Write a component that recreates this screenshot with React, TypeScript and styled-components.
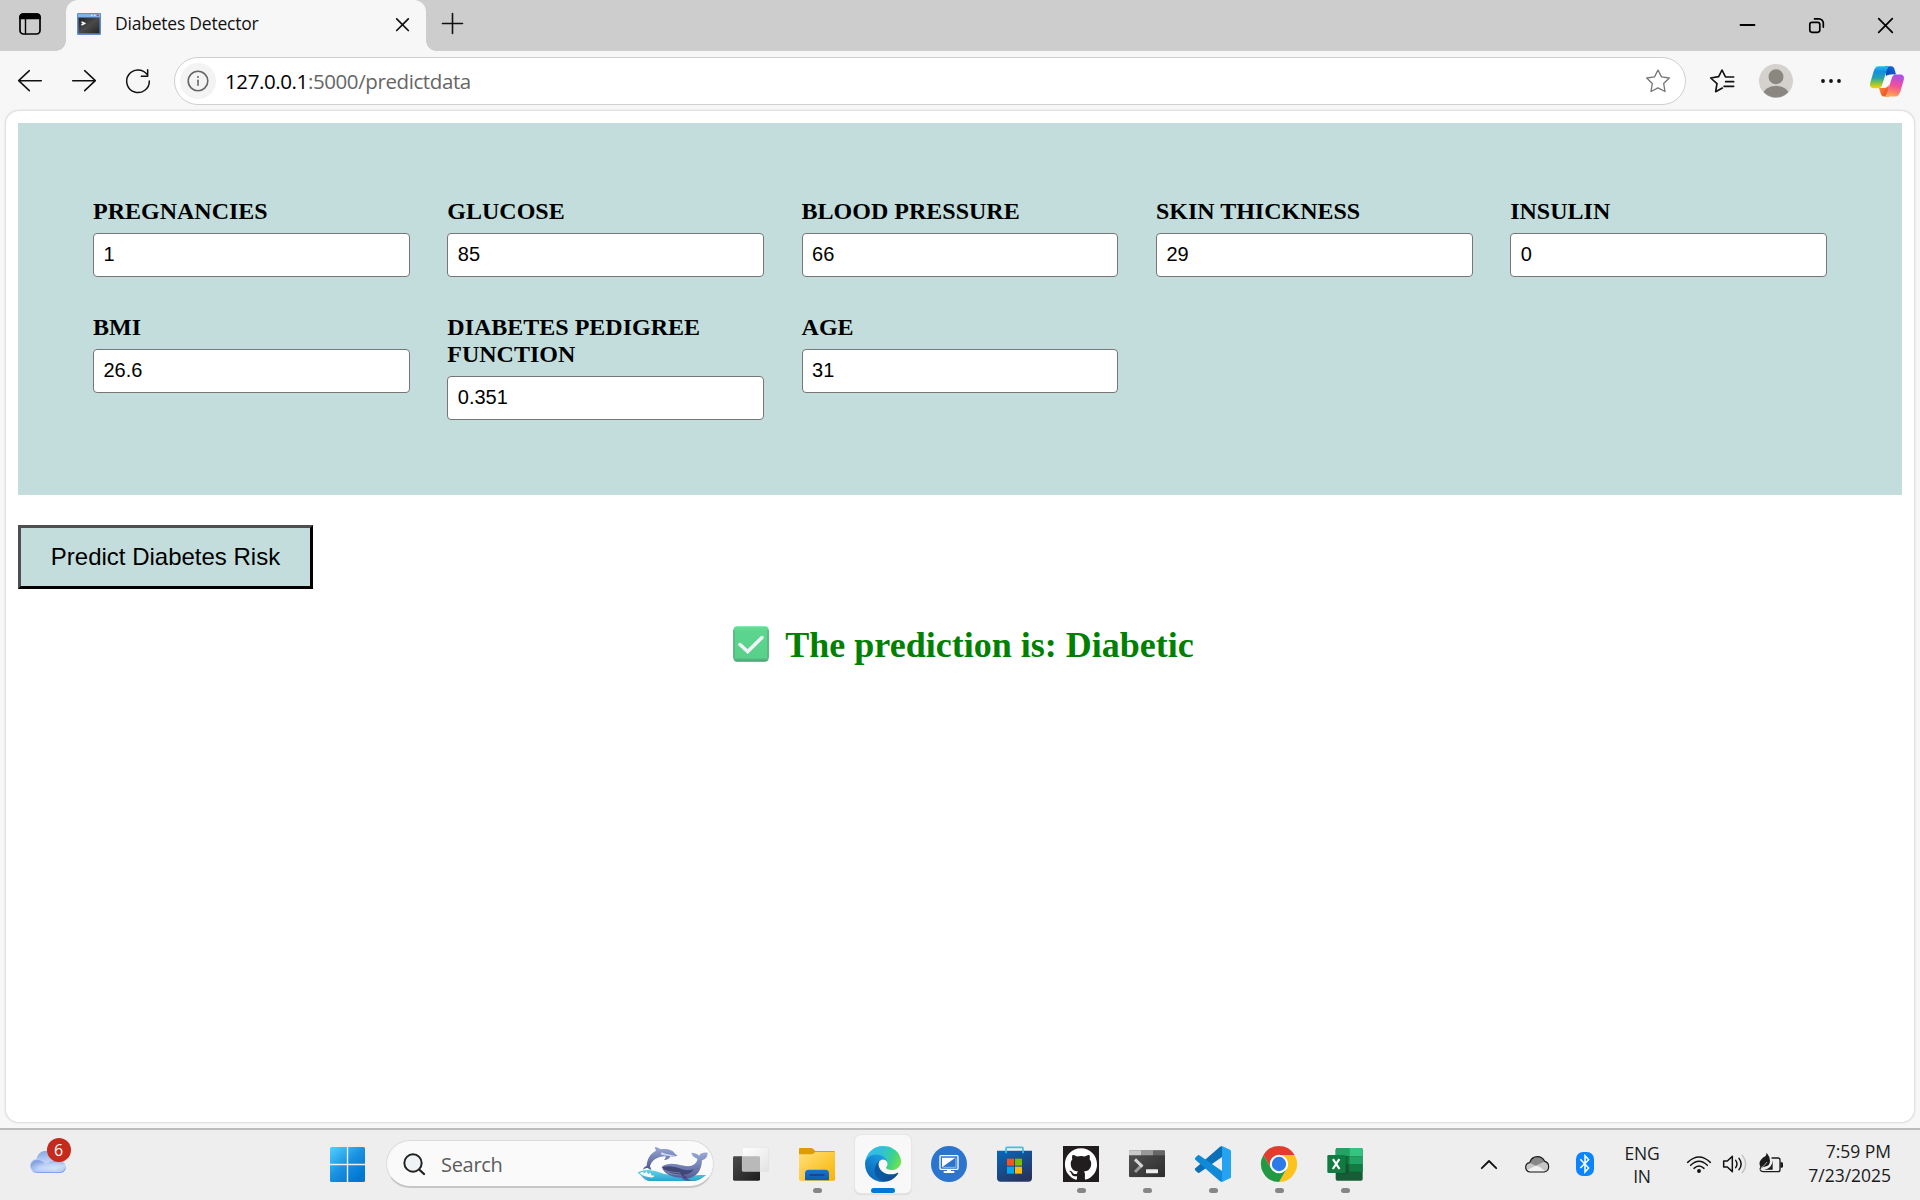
import React from "react";
import styled, { createGlobalStyle } from "styled-components";

const ui = `"Open Sans", "Noto Sans", sans-serif`;

const GlobalStyle = createGlobalStyle`
  * { box-sizing: border-box; }
  body { margin: 0; background: #f7f7f7; overflow: hidden; }
  svg { display: block; flex: none; overflow: visible; }
`;

const Screen = styled.div`
  display: flex;
  flex-direction: column;
  width: 1920px;
  height: 1200px;
  background: #f7f7f7;
  font-family: ${ui};
`;

/* ---------- tab strip ---------- */
const TabStrip = styled.div`
  display: flex;
  height: 51px;
  flex: none;
  background: #cdcdcd;
`;

const TabActions = styled.div`
  display: flex;
  align-items: flex-start;
  width: 66px;
  padding: 13px 0 0 19px;
`;

const Tab = styled.div`
  position: relative;
  display: flex;
  align-items: center;
  width: 360px;
  height: 51px;
  padding: 0 17px 3px 11px;
  border-radius: 12px 12px 0 0;
  background: #f7f7f7;

  &::before,
  &::after {
    content: "";
    position: absolute;
    bottom: 0;
    width: 10px;
    height: 10px;
  }
  &::before {
    left: -10px;
    background: radial-gradient(circle at 0 0, transparent 9.5px, #f7f7f7 10px);
  }
  &::after {
    right: -10px;
    background: radial-gradient(circle at 100% 0, transparent 9.5px, #f7f7f7 10px);
  }
`;

const TabTitle = styled.span`
  flex: 1;
  margin-left: 14px;
  padding-bottom: 2px;
  font-size: 17.5px;
  letter-spacing: -0.22px;
  line-height: 24px;
  color: #111;
  white-space: nowrap;
`;

const NewTab = styled.div`
  flex: 1;
  padding: 13px 0 0 16px;
`;

const WindowControls = styled.div`
  display: flex;
  gap: 54px;
  padding: 18px 27px 0 0;
`;

/* ---------- toolbar ---------- */
const Toolbar = styled.div`
  display: flex;
  align-items: center;
  height: 60px;
  flex: none;
  padding: 0 16px 0 18px;
`;

const NavButtons = styled.div`
  display: flex;
  align-items: center;
  gap: 30px;
  width: 156px;
`;

const AddressBar = styled.div`
  display: flex;
  align-items: center;
  width: 1512px;
  height: 48px;
  padding: 0 15px 0 5px;
  border: 1.5px solid #cfcfcf;
  border-radius: 24px;
  background: #fff;
`;

const InfoBadge = styled.div`
  display: grid;
  place-items: center;
  width: 36px;
  height: 36px;
  border-radius: 50%;
  background: #f3f3f3;
`;

const Url = styled.div`
  flex: 1;
  margin-left: 9px;
  padding-bottom: 1px;
  font-size: 20.5px;
  letter-spacing: -0.4px;
  line-height: 28px;
  color: #666;
  white-space: nowrap;
`;

const UrlHost = styled.span`
  color: #000;
`;

const ToolbarIcons = styled.div`
  display: flex;
  align-items: center;
  gap: 28.5px;
  margin-left: 24px;
`;

const FavoritesButton = styled.div`
  margin-right: -5px;
`;

/* ---------- page ---------- */
const Page = styled.main`
  height: 1011px;
  flex: none;
  margin: 0 6px 6px;
  padding: 12px;
  border-radius: 13px;
  background: #fff;
  box-shadow: 0 0 2px 0.5px rgba(0, 0, 0, 0.12);
`;

const FormPanel = styled.form`
  display: grid;
  grid-template-columns: repeat(5, 1fr);
  align-items: start;
  gap: 37.5px;
  height: 372px;
  padding: 75px;
  background: #c3dddc;
`;

const Field = styled.label`
  display: flex;
  flex-direction: column;
  gap: 8px;
  font: bold 24px/27px "Liberation Serif", "Times New Roman", serif;
  color: #000;
`;

const Input = styled.input`
  width: 100%;
  height: 43.5px;
  padding: 0 9px 1.5px 9.5px;
  border: 1px solid #767676;
  border-radius: 4px;
  outline: none;
  background: #fff;
  font: 20px/23px "Liberation Sans", Arial, sans-serif;
  color: #000;
`;

const PredictButton = styled.button`
  display: block;
  width: 295px;
  height: 64px;
  margin: 30px 0 0;
  padding: 0 0 1px;
  border: 3px solid;
  border-color: #4f4f51 #000 #000 #4f4f51;
  border-radius: 0;
  background: #c3dddc;
  font: 24px/28px "Liberation Sans", Arial, sans-serif;
  color: #000;
  white-space: nowrap;
`;

const Result = styled.h2`
  display: flex;
  align-items: center;
  justify-content: center;
  gap: 16px;
  height: 42px;
  margin: 35px 0 0;
  padding-left: 7px;
  font: bold 36px/42px "Liberation Serif", "Times New Roman", serif;
  color: #008000;
  white-space: nowrap;

  svg {
    margin-bottom: 2px;
  }
`;

/* ---------- taskbar ---------- */
const Taskbar = styled.footer`
  display: flex;
  height: 72px;
  flex: none;
  border-top: 2px solid #bcbcbc;
  background: #eee;
`;

const Widgets = styled.div`
  width: 314px;
  padding: 8px 0 0 30px;
`;

const WidgetIcon = styled.div`
  position: relative;
  width: 42px;
  height: 36px;
`;

const CountBadge = styled.span`
  position: absolute;
  top: 0;
  left: 16.5px;
  width: 24px;
  height: 24px;
  border-radius: 50%;
  background: #c42b1c;
  font-size: 16px;
  line-height: 24px;
  text-align: center;
  color: #fff;
`;

const AppSlot = styled.div`
  display: flex;
  flex-direction: column;
  align-items: center;
  width: 66px;
  padding-top: 5px;
`;

const AppTile = styled.div<{ $active?: boolean }>`
  display: grid;
  place-items: center;
  position: relative;
  width: 56px;
  height: 58px;
  border-radius: 6px;
  background: ${(p) => (p.$active ? "#f8f8f8" : "transparent")};
  box-shadow: ${(p) => (p.$active ? "0 0 0 1px #e6e6e6, 0 1px 1px 0.5px #dcdcdc" : "none")};
`;

const Indicator = styled.span<{ $active?: boolean }>`
  position: absolute;
  bottom: 0;
  left: ${(p) => (p.$active ? "16px" : "23.5px")};
  width: ${(p) => (p.$active ? "24px" : "9px")};
  height: 5px;
  border-radius: 2.5px;
  background: ${(p) => (p.$active ? "#0078d4" : "#868686")};
`;

const SearchBox = styled.div`
  display: flex;
  align-items: center;
  width: 328px;
  height: 48px;
  margin: 10px 4px 0 6px;
  padding: 1px 5px 0 16px;
  border: 1.5px solid #dcdcdc;
  border-bottom: 2px solid #c6c6c6;
  border-radius: 24px;
  background: #fafafa;
`;

const SearchText = styled.span`
  flex: 1;
  margin-left: 16px;
  padding-top: 1px;
  font-size: 20px;
  letter-spacing: -0.3px;
  line-height: 28px;
  color: #5c5c5c;
`;

const Tray = styled.div`
  display: flex;
  flex: 1;
  justify-content: flex-end;
  height: 68px;
  padding-right: 29px;
  align-items: center;
`;

const TrayItem = styled.div<{ $gap: number }>`
  margin-right: ${(p) => p.$gap}px;
`;

const Language = styled.div`
  width: 40px;
  margin-right: 25px;
  padding-top: 1px;
  font-size: 17.5px;
  letter-spacing: -0.25px;
  line-height: 23px;
  text-align: center;
  color: #1b1b1b;
`;

const Clock = styled.div`
  width: 108px;
  padding-bottom: 2px;
  font-size: 17.5px;
  letter-spacing: -0.02px;
  line-height: 24px;
  text-align: right;
  white-space: nowrap;
  color: #1b1b1b;
`;

/* ---------- icons ---------- */
type StrokeProps = { w: number; h: number; box: string; sw?: number; color?: string; children: React.ReactNode };
const Stroke = ({ w, h, box, sw = 1.6, color = "#111", children }: StrokeProps) => (
  <svg width={w} height={h} viewBox={box} fill="none" stroke={color} strokeWidth={sw} strokeLinecap="round" strokeLinejoin="round">
    {children}
  </svg>
);

const ConsoleFavicon = () => (
  <svg width="24" height="22" viewBox="0 0 24 22">
    <defs>
      <linearGradient id="cf" x1="0" y1="0" x2="1" y2="1">
        <stop offset="0" stopColor="#222" /><stop offset=".5" stopColor="#4a4a4a" /><stop offset="1" stopColor="#252525" />
      </linearGradient>
    </defs>
    <rect width="24" height="22" rx="1" fill="#5d8ed0" />
    <rect x="1" y="1" width="22" height="3" fill="#85b1ea" />
    <rect x="1.5" y="4.7" width="21" height="15.6" fill="url(#cf)" />
    <path d="M14 2.3h1.5M17 2.3h1.5" stroke="#dcebff" strokeWidth="1.3" />
    <path d="M19.7 2.3h2" stroke="#e23b2e" strokeWidth="1.6" />
    <path d="M4.5 9l3 1.4-3 1.6M7.5 10.4l.5.4" stroke="#fff" strokeWidth="1.5" fill="none" />
  </svg>
);

const CopilotIcon = () => (
  <svg width="34" height="31" viewBox="810 198 102 92">
    <defs>
      <linearGradient id="cpa" x1="0" y1="0" x2="0" y2="1">
        <stop offset="0" stopColor="#1cc0ee" /><stop offset=".25" stopColor="#118fe0" /><stop offset=".55" stopColor="#2aa5a8" /><stop offset=".78" stopColor="#8dc63f" /><stop offset="1" stopColor="#ffd000" />
      </linearGradient>
      <linearGradient id="cpb" x1=".5" y1="0" x2=".3" y2="1">
        <stop offset="0" stopColor="#ad4fe8" /><stop offset=".45" stopColor="#ee4f9e" /><stop offset=".75" stopColor="#fb7b70" /><stop offset="1" stopColor="#ffb04d" />
      </linearGradient>
      <linearGradient id="cpc" x1="0" y1="1" x2="1" y2="0">
        <stop offset="0" stopColor="#0a3fae" /><stop offset="1" stopColor="#1567e0" />
      </linearGradient>
      <linearGradient id="cpd" x1="0" y1="0" x2="1" y2="1">
        <stop offset="0" stopColor="#ff9a2e" /><stop offset="1" stopColor="#e8402f" />
      </linearGradient>
    </defs>
    <path d="M855 198h18c7 0 9 4 11 11l4 14h-12c-10 0-14 4-17 13z" fill="url(#cpc)" />
    <path d="M867 289h-14c-8 0-10-5-12-12l-4-14h12c10 0 14-5 17-14z" fill="url(#cpd)" />
    <path d="M835 198h37c-7 0-9 5-12 14l-13 40c-3 9-6 12-14 12h-12c-9 0-13-7-10-17l10-34c4-11 7-15 14-15z" fill="url(#cpa)" />
    <path d="M887 289h-37c7 0 9-5 12-14l13-40c3-9 6-12 14-12h12c9 0 13 7 10 17l-10 34c-4 11-7 15-14 15z" fill="url(#cpb)" />
    <path d="M881 224c-5 3-7 8-9 14l-4 13c-3 8-7 12-14 12h-13c5-3 7-8 9-14l4-12c3-9 7-13 14-13z" fill="#fafafa" />
  </svg>
);

const CheckMark = () => (
  <svg width="36" height="36" viewBox="0 0 36 36" role="img" aria-label="check">
    <defs>
      <linearGradient id="ck" x1="0" y1="0" x2="0" y2="1">
        <stop offset="0" stopColor="#5ee494" /><stop offset=".15" stopColor="#5bd58f" /><stop offset=".88" stopColor="#59d18b" /><stop offset="1" stopColor="#4b9a6e" />
      </linearGradient>
    </defs>
    <rect x=".3" y=".3" width="35.4" height="35.4" rx="4" fill="url(#ck)" />
    <path d="M.9 4v28M35.1 4v28" stroke="#4aa877" strokeWidth="1.1" fill="none" />
    <path d="M7 18.5l7.7 7L29 11.5" stroke="#f3f3f7" strokeWidth="3.5" fill="none" strokeLinecap="round" strokeLinejoin="miter" />
  </svg>
);

const CloudIcon = () => (
  <svg width="36" height="36" viewBox="90 144 108 108">
    <defs>
      <linearGradient id="cl" x1="0" y1="0" x2=".2" y2="1">
        <stop offset="0" stopColor="#7f9fe0" /><stop offset=".5" stopColor="#b7cdf2" /><stop offset=".85" stopColor="#d3e0f5" /><stop offset="1" stopColor="#7ea4ec" />
      </linearGradient>
      <radialGradient id="cl2" cx=".7" cy=".8" r=".8">
        <stop offset="0" stopColor="#dfe9f8" /><stop offset=".6" stopColor="#b9cff3" /><stop offset="1" stopColor="#7796dc" />
      </radialGradient>
    </defs>
    <path d="M110 249c-12 0-20-9-20-20 0-12 8-21 19-21 3-16 15-26 30-26 17 0 30 12 32 28 15-1 27 6 27 20 0 12-9 19-20 19z" fill="url(#cl)" />
    <path d="M110 246c-10 0-18-8-18-18s8-18 19-18c12 0 20 5 26 13 10-8 25-13 37-10 13 1 21 7 21 17s-8 16-18 16z" fill="url(#cl2)" opacity=".75" />
  </svg>
);

const StartIcon = () => (
  <svg width="35" height="35" viewBox="0 0 35 35">
    <defs>
      <linearGradient id="st" gradientUnits="userSpaceOnUse" x1="0" y1="0" x2="28" y2="32">
        <stop offset="0" stopColor="#4fd2ff" /><stop offset=".55" stopColor="#1a91e0" /><stop offset="1" stopColor="#0077d3" />
      </linearGradient>
    </defs>
    <path d="M1.5 0H16.8V16.8H0V1.5A1.5 1.5 0 0 1 1.5 0zM18.2 0H33.5A1.5 1.5 0 0 1 35 1.5V16.8H18.2zM0 18.2H16.8V35H1.5A1.5 1.5 0 0 1 0 33.5zM18.2 18.2H35V33.5A1.5 1.5 0 0 1 33.5 35H18.2z" fill="url(#st)" />
  </svg>
);

const SearchIcon = () => (
  <Stroke w={22} h={22} box="98 98 66 66" sw={6} color="#222">
    <circle cx="128" cy="128" r="26" fill="#f0f3f5" />
    <path d="M148 149l13 12" strokeWidth="7" />
  </Stroke>
);

const DolphinArt = () => (
  <svg width="71" height="36" viewBox="799 88 213 106">
    <defs>
      <linearGradient id="dl" x1="0" y1="0" x2="0" y2="1">
        <stop offset="0" stopColor="#96a8d8" /><stop offset="1" stopColor="#4d568f" />
      </linearGradient>
      <linearGradient id="sea" x1="0" y1="0" x2="0" y2="1">
        <stop offset="0" stopColor="#62d4e8" /><stop offset="1" stopColor="#27a6c8" />
      </linearGradient>
    </defs>
    <path d="M801 167c12-9 32-10 52-5 26 8 40 14 76 14 30 1 55-3 78-2-14 10-22 18-40 18H840c-14 0-22-8-28-16z" fill="url(#sea)" />
    <path d="M806 169l10-5 5 5 7-6 4 8 8-4 2 8 9 1-3 5c-17 1-30-3-42-12z" fill="#edf9fc" />
    <path d="M817 158c2-6 5-10 11-11 1-21 10-37 28-46l-4-11c9 1 14 4 18 7 22-3 39 4 43 14l8 4c-6 4-14 4-22 3-3 8-9 11-19 11 4-3 5-7 5-11-22-1-43 12-47 30l4 10c-4 0-7-1-9-4-5-3-10 0-16 4z" fill="url(#dl)" />
    <path d="M870 112c17 5 32 6 44 3-16-1-30-4-41-9z" fill="#d4def2" />
    <path d="M873 150c10-9 28-12 46-8 20 4 36 9 48 2 9-5 13-12 13-19-9-4-16-8-18-18 10 0 18 2 23 9 4-7 13-10 26-9 0 12-6 20-17 23-1 24-11 43-27 49-6 3-13 5-20 5l16 7c-14 2-24-1-31-9-27-1-52-10-59-32z" fill="url(#dl)" />
    <path d="M875 150c16-4 38-2 57 6 14 5 27 5 37 0-7 12-20 18-32 17l15 12c-9 0-15-4-20-11-25-2-50-9-57-24z" fill="#414775" />
    <path d="M889 166c12 5 28 7 43 8M882 160c15 5 31 7 47 8" stroke="#9fadd5" strokeWidth="1.5" fill="none" />
  </svg>
);

const TaskViewIcon = () => (
  <svg width="36" height="34" viewBox="1089 81 108 102">
    <defs>
      <linearGradient id="tvd" x1="0" y1="0" x2="1" y2="1"><stop offset="0" stopColor="#4b4b4b" /><stop offset="1" stopColor="#1d1d1d" /></linearGradient>
      <linearGradient id="tvl" x1="0" y1="0" x2="1" y2="1"><stop offset="0" stopColor="#fff" /><stop offset="1" stopColor="#e3e3e3" /></linearGradient>
    </defs>
    <rect x="1089" y="109" width="81" height="73" rx="4" fill="url(#tvd)" />
    <rect x="1117" y="82" width="79" height="72" rx="3" fill="url(#tvl)" stroke="#dcdcdc" strokeWidth="1.5" />
    <path d="M1117 109h49q4 0 4 4v41h-53z" fill="#b9b9b9" />
  </svg>
);

const ExplorerIcon = () => (
  <svg width="36" height="36" viewBox="87 78 108 108">
    <defs>
      <linearGradient id="ex" x1="0" y1="0" x2="1" y2="1"><stop offset="0" stopColor="#ffe07a" /><stop offset="1" stopColor="#f8b400" /></linearGradient>
      <linearGradient id="exb" x1="0" y1="0" x2="0" y2="1"><stop offset="0" stopColor="#1177cf" /><stop offset="1" stopColor="#0f5ca8" /></linearGradient>
    </defs>
    <path d="M87 87q0-3 4-3h32q4 0 7 3l6 6h55q4 0 4 4v20H87z" fill="#dc9c07" />
    <path d="M87 103h38q4 0 7-3l4-4h56q3 0 3 3v79q0 4-4 4H91q-4 0-4-4z" fill="url(#ex)" />
    <path d="M105 181v-21q0-11 11-11h50q11 0 11 11v21z" fill="url(#exb)" />
    <path d="M120 165h42" stroke="#0a4386" strokeWidth="4" strokeLinecap="round" />
  </svg>
);

const EdgeIcon = () => (
  <svg width="36" height="36" viewBox="0 0 256 256">
    <defs>
      <linearGradient id="e1" x1="0.2" y1="0" x2="1" y2="0"><stop offset="0" stopColor="#0c59a4" /><stop offset="1" stopColor="#114a8b" /></linearGradient>
      <linearGradient id="e2" x1=".8" y1=".2" x2=".3" y2="1"><stop offset="0" stopColor="#1b9de2" /><stop offset=".4" stopColor="#1483d0" /><stop offset="1" stopColor="#0a64b5" /></linearGradient>
      <linearGradient id="e3" x1="0" y1=".3" x2="1" y2=".6"><stop offset="0" stopColor="#35b8f1" /><stop offset=".45" stopColor="#2fc3d2" /><stop offset=".75" stopColor="#3fd18c" /><stop offset="1" stopColor="#6be34c" /></linearGradient>
    </defs>
    <path transform="translate(-4.63 -4.92)" fill="url(#e1)" d="M235.68 195.46a93.73 93.73 0 0 1-10.54 4.71 101.87 101.87 0 0 1-35.9 6.46c-47.32 0-88.54-32.55-88.54-74.32A31.48 31.48 0 0 1 117.13 105c-42.8 1.8-53.8 46.4-53.8 72.53 0 73.88 68.09 81.37 82.76 81.37 7.91 0 19.84-2.3 27-4.56l1.31-.44A128.34 128.34 0 0 0 240.94 201.1a4 4 0 0 0-5.26-5.64z" />
    <path transform="translate(-4.63 -4.92)" fill="url(#e2)" d="M110.34 246.34A79.2 79.2 0 0 1 87.6 225a80.72 80.72 0 0 1 29.53-120c3.12-1.47 8.45-4.05 15.54-3.94a32.35 32.35 0 0 1 25.69 13 31.88 31.88 0 0 1 6.36 18.66c0-.21 24.46-79.6-80-79.6-43.9 0-80 41.66-80 78.21a130.15 130.15 0 0 0 12.11 56 128 128 0 0 0 156.38 67.11 75.55 75.55 0 0 1-62.78-8z" />
    <path fill="url(#e3)" d="M152.33 148.86c-.81 1.05-3.3 2.5-3.3 5.66 0 2.61 1.7 5.12 4.72 7.23 14.38 10 41.49 8.68 41.56 8.68a59.56 59.56 0 0 0 30.27-8.35 61.38 61.38 0 0 0 30.43-52.88c.26-22.41-8-37.31-11.34-43.91C223.46 23.84 177.72 0 128 0A128 128 0 0 0 0 126.2c.48-36.54 36.8-66.05 80-66.05 3.5 0 23.46.34 42 10.07 16.34 8.58 24.9 18.94 30.85 29.21 6.18 10.67 7.28 24.15 7.28 29.52s-2.74 13.33-7.8 19.91z" />
  </svg>
);

const RemoteIcon = () => (
  <svg width="36" height="36" viewBox="483 78 108 108">
    <circle cx="537" cy="132" r="54" fill="#2b75cf" />
    <rect x="510" y="107" width="54" height="41" rx="3" fill="none" stroke="#fff" strokeWidth="4" />
    <path d="M516 113h40l-40 29z" fill="#fff" />
    <path d="M558 113v29h-40" fill="none" stroke="#fff" strokeWidth="1.5" />
    <path d="M531 149h12v4h10v6h-32v-6h10z" fill="#fff" />
  </svg>
);

const StoreIcon = () => (
  <svg width="36" height="36" viewBox="681 79 108 108">
    <defs><linearGradient id="sto" x1="0" y1="0" x2=".6" y2="1"><stop offset="0" stopColor="#0669bd" /><stop offset="1" stopColor="#273560" /></linearGradient></defs>
    <path d="M681 93h105v82q0 11-11 11h-83q-11 0-11-11z" fill="url(#sto)" />
    <path d="M708 101V86q0-3 3-3h45q3 0 3 3v15" fill="none" stroke="#35c1f1" strokeWidth="5" />
    <path d="M711 117h21v21h-21z" fill="#f35325" /><path d="M735 117h21v21h-21z" fill="#7fba00" />
    <path d="M711 141h21v21h-21z" fill="#05a6f0" /><path d="M735 141h21v21h-21z" fill="#ffba08" />
  </svg>
);

const GithubIcon = () => (
  <svg width="36" height="36" viewBox="0 0 36 36">
    <rect width="36" height="36" fill="#211c1e" />
    <path transform="translate(1.9 1.9) scale(1.34)" fill="#fff" d="M12 .297c-6.63 0-12 5.373-12 12 0 5.303 3.438 9.8 8.205 11.385.6.113.82-.258.82-.577 0-.285-.01-1.04-.015-2.04-3.338.724-4.042-1.61-4.042-1.61C4.422 18.07 3.633 17.7 3.633 17.7c-1.087-.744.084-.729.084-.729 1.205.084 1.838 1.236 1.838 1.236 1.07 1.835 2.809 1.305 3.495.998.108-.776.417-1.305.76-1.605-2.665-.3-5.466-1.332-5.466-5.93 0-1.31.465-2.38 1.235-3.22-.135-.303-.54-1.523.105-3.176 0 0 1.005-.322 3.3 1.23.96-.267 1.98-.399 3-.405 1.02.006 2.04.138 3 .405 2.28-1.552 3.285-1.23 3.285-1.23.645 1.653.24 2.873.12 3.176.765.84 1.23 1.91 1.23 3.22 0 4.61-2.805 5.625-5.475 5.92.42.36.81 1.096.81 2.22 0 1.606-.015 2.896-.015 3.286 0 .315.21.69.825.57C20.565 22.092 24 17.592 24 12.297c0-6.627-5.373-12-12-12" />
  </svg>
);

const TerminalIcon = () => (
  <svg width="36" height="36" viewBox="207 77 108 108">
    <defs>
      <linearGradient id="tm" x1="0" y1="0" x2="1" y2="1"><stop offset="0" stopColor="#545454" /><stop offset="1" stopColor="#2c2c2c" /></linearGradient>
      <clipPath id="tmc"><rect x="207" y="90" width="108" height="81" rx="4" /></clipPath>
    </defs>
    <g clipPath="url(#tmc)">
      <rect x="207" y="90" width="108" height="81" fill="url(#tm)" />
      <path d="M207 90h36v15h-36z" fill="#c9c9c9" /><path d="M243 90h36v15h-36z" fill="#999" /><path d="M279 90h36v15h-36z" fill="#666" />
    </g>
    <path d="M247 133l-22 22" stroke="#9a9a9a" strokeWidth="9" />
    <path d="M225 117l22 22" stroke="#d6d6d6" strokeWidth="9" />
    <rect x="258" y="147" width="36" height="12" rx="1" fill="#ececec" />
  </svg>
);

const CodeIcon = () => (
  <svg width="36" height="36" viewBox="405 78 108 108">
    <path d="M480 80l6-2v33l-68 47q-3 2-6-1l-6-6q-3-3 0-6z" fill="#0a6fb7" />
    <path d="M480 184l6 2v-33l-68-47q-3-2-6 1l-6 6q-3 3 0 6z" fill="#108ad6" />
    <path d="M480 184q6 3 6-5V85q0-8-6-5l6-2 24 11q3 2 3 5v76q0 4-3 5l-24 11z" fill="#23a3f1" />
  </svg>
);

const ChromeIcon = () => (
  <svg width="36" height="36" viewBox="603 78 108 108">
    <path d="M610.2 105A54 54 0 0 1 703.8 105H657L633.6 145.5z" fill="#e33b2e" />
    <path d="M703.8 105A54 54 0 0 1 657 186L680.4 145.5L657 105z" fill="#fcc31e" />
    <path d="M657 186A54 54 0 0 1 610.2 105L633.6 145.5L680.4 145.5z" fill="#249943" />
    <circle cx="657" cy="132" r="27.5" fill="#fff" />
    <circle cx="657" cy="132" r="21.5" fill="#2c7be9" />
  </svg>
);

const ExcelIcon = () => (
  <svg width="36" height="36" viewBox="800 78 108 108">
    <rect x="826" y="84" width="81" height="98" rx="5" fill="#185c37" />
    <path d="M826 107V89q0-5 5-5h36v25h-41z" fill="#21a366" /><path d="M867 84h35q5 0 5 5v20h-40z" fill="#33c481" />
    <path d="M826 109h41v24h-41z" fill="#107c41" /><path d="M867 109h40v24h-40z" fill="#21a366" />
    <path d="M867 133h40v22h-40z" fill="#107c41" />
    <rect x="828" y="108" width="34" height="54" fill="#0b3f25" opacity=".35" />
    <rect x="801" y="105" width="55" height="54" rx="4" fill="#107c41" />
    <path d="M818 117.5L837.5 147M837 117.5L817.5 147" stroke="#fff" strokeWidth="6.5" />
  </svg>
);

const OneDriveIcon = () => (
  <svg width="24" height="17" viewBox="255 197 72 50">
    <path d="M269 245q-12-2-12-14 0-12 12-14 6-18 23-18 15 0 22 14 12 3 12 16t-13 16z" fill="#c6c6c6" />
    <path d="M269 217q6-18 23-18 15 0 22 14l-27 13z" fill="#888" />
    <path d="M259 240l28-14q18 3 27 18h-45z" fill="#f2f2f2" />
    <path d="M269 244.5q-12-2-12-14 0-12 12-14 6-18 23-18 15 0 22 14 12 3 12 16t-13 16z" fill="none" stroke="#1b1b1b" strokeWidth="3.5" />
  </svg>
);

const BluetoothIcon = () => (
  <svg width="18" height="24" viewBox="408 186 54 72">
    <rect x="408" y="186" width="54" height="72" rx="21" fill="#0a84ff" />
    <path d="M421 208l25 26-11 12v-49l11 12-25 25" fill="none" stroke="#fff" strokeWidth="4.5" />
  </svg>
);

const BatteryIcon = () => (
  <svg width="24" height="20" viewBox="957 190 72 60">
    <path d="M996 202h18q6 0 6 6v29q0 6-6 6h-44q-7 0-9-5" fill="none" stroke="#1b1b1b" strokeWidth="4" strokeLinecap="round" />
    <path d="M1021 215h5q3 0 3 4v8q0 4-3 4h-5z" fill="#1b1b1b" />
    <path d="M972 237q24-2 26-28v28z" fill="#1b1b1b" />
    <path d="M980 186q10 12 10 24 0 16-16 18-7 1-10 5-3 3-6 3 1-4 3-7-6-14 2-22 6-7 13-10 3-4 4-11z" fill="#1b1b1b" />
    <path d="M963 231q10-4 18-17" stroke="#eee" strokeWidth="2" fill="none" />
  </svg>
);

const FIELDS: [string, string][] = [
  ["PREGNANCIES", "1"],
  ["GLUCOSE", "85"],
  ["BLOOD PRESSURE", "66"],
  ["SKIN THICKNESS", "29"],
  ["INSULIN", "0"],
  ["BMI", "26.6"],
  ["DIABETES PEDIGREE FUNCTION", "0.351"],
  ["AGE", "31"],
];

type AppEntry = { name: string; Icon: () => React.ReactElement; running?: boolean; active?: boolean };
const APPS: AppEntry[] = [
  { name: "taskview", Icon: TaskViewIcon },
  { name: "explorer", Icon: ExplorerIcon, running: true },
  { name: "edge", Icon: EdgeIcon, running: true, active: true },
  { name: "remote", Icon: RemoteIcon },
  { name: "store", Icon: StoreIcon },
  { name: "github", Icon: GithubIcon, running: true },
  { name: "terminal", Icon: TerminalIcon, running: true },
  { name: "code", Icon: CodeIcon, running: true },
  { name: "chrome", Icon: ChromeIcon, running: true },
  { name: "excel", Icon: ExcelIcon, running: true },
];

const STAR = "M174 210l10.5 20.5 23.5 3.5-17 16.5 4 24-21-11-21 11 4-24-17-16.5 23.5-3.5z";

export default function App() {
  return (
    <Screen>
      <GlobalStyle />
      <TabStrip>
        <TabActions>
          <Stroke w={22} h={22} box="0 0 22 22" sw={1.7} color="#000">
            <rect x="1" y="1" width="20" height="20" rx="3.5" />
            <path d="M1 5.5V4a3 3 0 0 1 3-3h14a3 3 0 0 1 3 3v1.5z" fill="#000" />
            <path d="M6.5 6v15" strokeWidth="1.4" />
          </Stroke>
        </TabActions>
        <Tab>
          <ConsoleFavicon />
          <TabTitle>Diabetes Detector</TabTitle>
          <Stroke w={13} h={13} box="0 0 13 13" sw={1.7}><path d="M.7 .9l11.6 11.6M12.3 .9L.7 12.5" /></Stroke>
        </Tab>
        <NewTab>
          <Stroke w={21} h={21} box="0 0 21 21" sw={1.6}><path d="M.5 10.5h20M10.5 .5v20" /></Stroke>
        </NewTab>
        <WindowControls>
          <Stroke w={15} h={15} box="0 0 15 15" sw={1.8} color="#000"><path d="M.5 7h14" /></Stroke>
          <Stroke w={15} h={15} box="0 0 15 15" sw={1.7} color="#000">
            <rect x=".8" y="4.3" width="10" height="10" rx="2.2" />
            <path d="M5.5 .8h4.5a4.3 4.3 0 0 1 4.3 4.3v4" />
          </Stroke>
          <Stroke w={15} h={15} box="0 0 15 15" sw={1.7} color="#000"><path d="M.7 .7l13.6 13.6M14.3 .7L.7 14.3" /></Stroke>
        </WindowControls>
      </TabStrip>

      <Toolbar>
        <NavButtons>
          <Stroke w={24} h={22} box="54 208 72 66" sw={4.5}><path d="M124 240H56M88 210l-32 30 32 30" /></Stroke>
          <Stroke w={24} h={22} box="216 208 72 66" sw={4.5}><path d="M218 240h68M254 210l32 30-32 30" /></Stroke>
          <Stroke w={24} h={24} box="378 206 72 72" sw={4.5}><path d="M441 222a34 34 0 1 0 7 20M443 208v20h-19" /></Stroke>
        </NavButtons>
        <AddressBar>
          <InfoBadge>
            <Stroke w={22} h={22} box="0 0 22 22" sw={1.6} color="#666">
              <circle cx="11" cy="11" r="9.8" /><path d="M11 10.3v4.9" /><path d="M11 6.9v.1" strokeWidth="2" />
            </Stroke>
          </InfoBadge>
          <Url><UrlHost>127.0.0.1</UrlHost>:5000/predictdata</Url>
          <Stroke w={24} h={24} box="138 207 72 72" sw={4} color="#777"><path d={STAR} /></Stroke>
        </AddressBar>
        <ToolbarIcons>
          <FavoritesButton>
            <Stroke w={25} h={24} box="330 207 75 72" sw={5}>
              <path d="M367 264l-20 11 4-24-19-17 24-4 10-20 10 20M377 231h24M377 245h24M372 259h29" />
            </Stroke>
          </FavoritesButton>
          <svg width="34" height="34" viewBox="0 0 34 34">
            <defs><clipPath id="av"><circle cx="17" cy="17" r="16.5" /></clipPath></defs>
            <circle cx="17" cy="17" r="17" fill="#d5d2cd" />
            <g clipPath="url(#av)" fill="#8a8680"><circle cx="17" cy="12.7" r="7.5" /><ellipse cx="17" cy="31" rx="13" ry="9.2" /></g>
          </svg>
          <svg width="20" height="4" viewBox="0 0 20 4" fill="#111"><circle cx="2" cy="2" r="1.9" /><circle cx="10" cy="2" r="1.9" /><circle cx="18" cy="2" r="1.9" /></svg>
          <CopilotIcon />
        </ToolbarIcons>
      </Toolbar>

      <Page>
        <FormPanel>
          {FIELDS.map(([label, value]) => (
            <Field key={label}>
              {label}
              <Input defaultValue={value} />
            </Field>
          ))}
        </FormPanel>
        <PredictButton type="button">Predict Diabetes Risk</PredictButton>
        <Result>
          <CheckMark />
          <span>The prediction is: Diabetic</span>
        </Result>
      </Page>

      <Taskbar>
        <Widgets>
          <WidgetIcon><CloudIcon /><CountBadge>6</CountBadge></WidgetIcon>
        </Widgets>
        <AppSlot><AppTile><StartIcon /></AppTile></AppSlot>
        <SearchBox>
          <SearchIcon />
          <SearchText>Search</SearchText>
          <DolphinArt />
        </SearchBox>
        {APPS.map(({ name, Icon, running, active }) => (
          <AppSlot key={name}>
            <AppTile $active={active}>
              <Icon />
              {running && <Indicator $active={active} />}
            </AppTile>
          </AppSlot>
        ))}
        <Tray>
          <TrayItem $gap={28}><Stroke w={16} h={9} box="0 0 16 9" sw={1.8}><path d="M.8 8.2L8 1l7.2 7.2" /></Stroke></TrayItem>
          <TrayItem $gap={27}><OneDriveIcon /></TrayItem>
          <TrayItem $gap={28}><BluetoothIcon /></TrayItem>
          <Language>ENG<br />IN</Language>
          <TrayItem $gap={12}>
            <Stroke w={24} h={17} box="741 196 72 51" sw={4.5}>
              <path d="M743 215q34-32 68 0M752 224q25-24 50 0M762 233q15-14 30 0" /><circle cx="777" cy="241" r="3.5" fill="#1b1b1b" />
            </Stroke>
          </TrayItem>
          <TrayItem $gap={12}>
            <Stroke w={24} h={20} box="849 192 72 60" sw={4.5}>
              <path d="M851 213h11l15-14v46l-15-14h-11zM887 211q8 11 0 22M897 205q13 17 0 34" />
              <path d="M907 196q20 26 0 52" stroke="#c4c4c4" />
            </Stroke>
          </TrayItem>
          <BatteryIcon />
          <Clock>7:59 PM<br />7/23/2025</Clock>
        </Tray>
      </Taskbar>
    </Screen>
  );
}
